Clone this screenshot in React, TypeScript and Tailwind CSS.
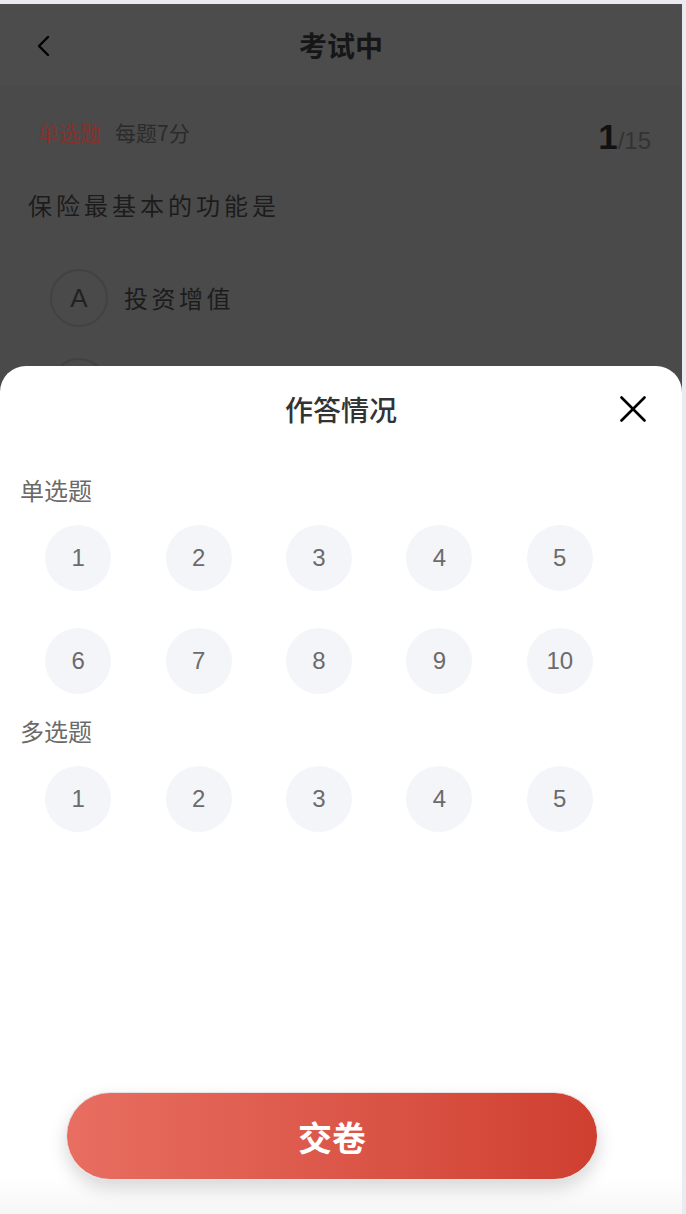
import React from "react";

const cjk = { fontFamily: '"Noto Sans CJK SC", "Noto Sans", sans-serif' };
const num = { fontFamily: '"Liberation Sans", Arial, "Noto Sans CJK SC", sans-serif' };

function Bubble({ n }: { n: number }) {
  return (
    <div className="flex justify-center">
      <div
        className="flex h-[66px] w-[66px] items-center justify-center rounded-full bg-[#f4f5f9] text-[24px] text-[#6b6b6b]"
        style={num}
      >
        {n}
      </div>
    </div>
  );
}

function Section({ title, items, first }: { title: string; items: number[]; first?: boolean }) {
  return (
    <div className={first ? "" : "mt-[23px]"}>
      <div className="pl-[20px] text-[24px] leading-[28px] text-[#6a6a6a]" style={cjk}>
        {title}
      </div>
      <div className="ml-[18px] mt-[21px] grid w-[602px] grid-cols-5 gap-y-[37px]">
        {items.map((n) => (
          <Bubble key={n} n={n} />
        ))}
      </div>
    </div>
  );
}

export default function App() {
  return (
    <div className="relative h-[1214px] w-[686px] overflow-hidden bg-[#e9ebf1]">
      <div className="ml-0 mt-[4px] h-[1210px] w-[682px] overflow-hidden bg-[#4a4a4a]">
        {/* header */}
        <div className="relative flex h-[82px] items-center justify-center bg-[#4c4c4c]">
          <svg className="absolute left-[36px] top-[31px]" width="16" height="22" viewBox="0 0 16 22">
            <polyline points="12,2 3,11 12,20" fill="none" stroke="#000" strokeWidth="2.4" strokeLinecap="round" strokeLinejoin="round" />
          </svg>
          <div className="text-[28px] font-semibold leading-[36px] text-[#161616]" style={cjk}>
            考试中
          </div>
        </div>
        {/* body */}
        <div className="pl-[38px] pr-[31px]">
          <div className="mt-[30px] flex items-start justify-between">
            <div className="flex items-center gap-[14px] text-[21px] leading-[32px]" style={cjk}>
              <span className="text-[#86312b]">单选题</span>
              <span className="text-[#2b2b2b]">每题7分</span>
            </div>
            <div className="mt-[3px] flex items-baseline" style={num}>
              <span className="text-[35px] font-bold leading-[36px] text-[#111]">1</span>
              <span className="text-[24px] text-[#333]">/15</span>
            </div>
          </div>
        </div>
        <div className="mt-[29px] pl-[28px] text-[24px] leading-[34px] tracking-[4px] text-[#1c1c1c]" style={cjk}>
          保险最基本的功能是
        </div>
        <div className="mt-[47px] flex items-center pl-[50px]">
          <div className="flex h-[58px] w-[58px] items-center justify-center rounded-full border-2 border-[#424242] text-[26px] text-[#222]" style={num}>
            A
          </div>
          <div className="ml-[16px] text-[24px] tracking-[3.5px] text-[#1c1c1c]" style={cjk}>
            投资增值
          </div>
        </div>
        <div className="mt-[31px] flex items-center pl-[50px]">
          <div className="h-[58px] w-[58px] rounded-full border-2 border-[#424242]" />
        </div>
      </div>

      {/* bottom sheet */}
      <div className="absolute left-0 top-[366px] flex h-[848px] w-[682px] flex-col rounded-t-[26px] bg-white">
        <div className="relative pt-[24px] text-center text-[28px] font-medium leading-[38px] text-[#333]" style={cjk}>
          作答情况
          <svg className="absolute right-[36px] top-[30px]" width="26" height="26" viewBox="0 0 26 26">
            <line x1="1.5" y1="1.5" x2="24.5" y2="24.5" stroke="#000" strokeWidth="2.6" strokeLinecap="round" />
            <line x1="24.5" y1="1.5" x2="1.5" y2="24.5" stroke="#000" strokeWidth="2.6" strokeLinecap="round" />
          </svg>
        </div>
        <div className="mt-[48px]">
          <Section title="单选题" items={[1, 2, 3, 4, 5, 6, 7, 8, 9, 10]} first />
          <Section title="多选题" items={[1, 2, 3, 4, 5]} />
        </div>
        <div className="flex-1" />
        <div className="bg-gradient-to-b from-white from-[70%] to-[#f6f6f6] pb-[34px]">
          <button
            className="ml-[66px] flex h-[88px] w-[532px] items-center justify-center rounded-full border-[1.5px] border-[#e8e2e2] bg-gradient-to-r from-[#e86e61] to-[#cf3f30] text-[34px] font-bold text-white shadow-[0_8px_18px_rgba(0,0,0,0.16)]"
            style={cjk}
          >
            交卷
          </button>
        </div>
      </div>
    </div>
  );
}
